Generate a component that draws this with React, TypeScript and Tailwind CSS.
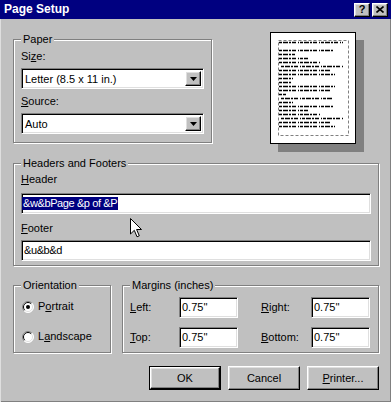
import React from "react";

// Win98 bevels
const RAISED =
  "border border-t-white border-l-white border-r-black border-b-black shadow-[inset_-1px_-1px_0_#808080,inset_1px_1px_0_#dfdfdf]";
const SUNKEN =
  "border border-t-[#808080] border-l-[#808080] border-r-white border-b-white shadow-[inset_1px_1px_0_#000,inset_-1px_-1px_0_#dfdfdf]";

const PAGE_ROWS: [number, number, number][] = [
  [10, 9, 64], [18, 9, 54], [22, 9, 16], [26, 9, 29], [30, 9, 42],
  [34, 11, 62], [38, 9, 52], [42, 9, 56], [46, 9, 14], [50, 9, 12],
  [54, 9, 56], [58, 9, 51], [62, 9, 7], [66, 11, 52], [70, 9, 14],
  [74, 9, 54], [78, 9, 29], [82, 9, 42], [86, 11, 62], [90, 9, 52],
  [94, 9, 56],
];

const GroupBox = ({ label, className, children }: { label: string; className?: string; children?: React.ReactNode }) => (
  <div className={`relative border border-[#808080] shadow-[inset_1px_1px_0_#fff,1px_1px_0_#fff] ${className ?? ""}`}>
    <span className="absolute -top-[7px] left-[7px] bg-[#c0c0c0] px-[2px] leading-[13px]">{label}</span>
    {children}
  </div>
);

const Combo = ({ value }: { value: string }) => (
  <div className={`h-[21px] bg-white flex items-stretch p-[2px] ${SUNKEN}`}>
    <span className="flex-1 pl-[1px] leading-[17px]">{value}</span>
    <span className={`w-[16px] bg-[#c0c0c0] flex items-center justify-center ${RAISED}`}>
      <svg width="7" height="4" viewBox="0 0 7 4">
        <polygon points="0,0 7,0 3.5,4" fill="#000" />
      </svg>
    </span>
  </div>
);

const Field = ({ children, className }: { children: React.ReactNode; className?: string }) => (
  <div className={`h-[21px] bg-white px-[2px] flex items-center ${SUNKEN} ${className ?? ""}`}>{children}</div>
);

const Radio = ({ checked }: { checked?: boolean }) => (
  <svg width="12" height="12" viewBox="0 0 12 12" className="shrink-0">
    <circle cx="6" cy="6" r="5.5" fill="#fff" />
    <path d="M9.9 2.1 A5.5 5.5 0 0 0 2.1 9.9" stroke="#808080" fill="none" />
    <path d="M2.1 9.9 A5.5 5.5 0 0 0 9.9 2.1" stroke="#fff" fill="none" />
    <path d="M9.2 2.8 A4.5 4.5 0 0 0 2.8 9.2" stroke="#000" fill="none" />
    <path d="M2.8 9.2 A4.5 4.5 0 0 0 9.2 2.8" stroke="#dfdfdf" fill="none" />
    {checked && <circle cx="6" cy="6" r="2" fill="#000" />}
  </svg>
);

const Btn = ({ children }: { children: React.ReactNode }) => (
  <button className={`w-[72px] h-[24px] bg-[#c0c0c0] flex items-center justify-center ${RAISED}`}>{children}</button>
);

export default function App() {
  return (
    <div className="relative w-[391px] h-[402px] overflow-hidden bg-[#c0c0c0] text-black text-[11px] leading-[13px] font-['Liberation_Sans',Arial,sans-serif] shadow-[inset_1px_0_0_#dfdfdf,inset_-1px_-1px_0_#808080]">
      {/* Title bar */}
      <div className="h-[19px] bg-[#000080] flex items-center pl-[4px] pr-[3px]">
        <span className="flex-1 text-white font-bold text-[12px]">Page Setup</span>
        <div className="flex gap-[2px]">
          <span className={`w-[16px] h-[14px] bg-[#c0c0c0] flex items-center justify-center font-bold text-[11px] leading-none ${RAISED}`}>?</span>
          <span className={`w-[16px] h-[14px] bg-[#c0c0c0] flex items-center justify-center ${RAISED}`}>
            <svg width="8" height="7" viewBox="0 0 8 7">
              <path d="M0.5 0.5 L7.5 6.5 M7.5 0.5 L0.5 6.5" stroke="#000" strokeWidth="1.6" />
            </svg>
          </span>
        </div>
      </div>

      <div className="pl-[13px] pr-[12px]">
        {/* Paper + preview */}
        <div className="flex items-start">
          <GroupBox label="Paper" className="mt-[20px] w-[199px] px-[7px] pt-[10px] pb-[8px]">
            <div>Si<u>z</u>e:</div>
            <div className="mt-[5px]"><Combo value="Letter (8.5 x 11 in.)" /></div>
            <div className="mt-[6px]"><u>S</u>ource:</div>
            <div className="mt-[5px]"><Combo value="Auto" /></div>
          </GroupBox>

          <div className="ml-[58px] mt-[13px] mb-[8px] w-[86px] h-[112px] bg-white border border-black shadow-[8px_8px_0_#808080]">
            <svg width="84" height="110" viewBox="1 1 84 110">
              <rect x="8.5" y="8.5" width="70" height="95" fill="none" stroke="#808080" strokeDasharray="3 2" />
              {PAGE_ROWS.map(([y, x, w], i) => (
                <line key={i} x1={x} y1={y + 0.5} x2={x + w} y2={y + 0.5} stroke="#000" strokeWidth="1.3" strokeDasharray="3 1 5 1 2 1 4 2 1 1" />
              ))}
            </svg>
          </div>
        </div>

        {/* Headers and Footers */}
        <GroupBox label="Headers and Footers" className="mt-[11px] px-[7px] pt-[9px] pb-[4px]">
          <div><u>H</u>eader</div>
          <Field className="mt-[7px] !px-0">
            <span className="bg-[#000080] text-white px-[1px] leading-[13px] tracking-[-0.4px]">&amp;w&amp;bPage &amp;p of &amp;P</span>
          </Field>
          <div className="mt-[8px]"><u>F</u>ooter</div>
          <Field className="mt-[5px] tracking-[-0.4px]">&amp;u&amp;b&amp;d</Field>
        </GroupBox>

        {/* Orientation + Margins */}
        <div className="mt-[19px] flex gap-[11px]">
          <GroupBox label="Orientation" className="w-[98px] h-[68px] pl-[8px] pt-[14px]">
            <div className="flex items-center gap-[4px]">
              <Radio checked />
              <span>P<u>o</u>rtrait</span>
            </div>
            <div className="mt-[17px] flex items-center gap-[4px]">
              <Radio />
              <span>L<u>a</u>ndscape</span>
            </div>
          </GroupBox>

          <GroupBox label="Margins (inches)" className="flex-1 h-[68px] px-[7px] pt-[11px]">
            <div className="flex items-center">
              <span className="w-[49px]"><u>L</u>eft:</span>
              <Field className="w-[59px]">0.75''</Field>
              <span className="ml-[23px] w-[50px]"><u>R</u>ight:</span>
              <Field className="w-[59px]">0.75''</Field>
            </div>
            <div className="mt-[9px] flex items-center">
              <span className="w-[49px]"><u>T</u>op:</span>
              <Field className="w-[59px]">0.75''</Field>
              <span className="ml-[23px] w-[50px]"><u>B</u>ottom:</span>
              <Field className="w-[59px]">0.75''</Field>
            </div>
          </GroupBox>
        </div>

        {/* Buttons */}
        <div className="mt-[13px] flex justify-end gap-[7px]">
          <div className="border border-black">
            <button className={`w-[70px] h-[22px] bg-[#c0c0c0] flex items-center justify-center ${RAISED}`}>OK</button>
          </div>
          <Btn>Cancel</Btn>
          <Btn><span><u>P</u>rinter...</span></Btn>
        </div>
      </div>

      {/* Mouse pointer */}
      <svg className="absolute left-[130px] top-[218px]" width="12" height="20" viewBox="0 0 12 20">
        <path d="M0.5 0.5 L0.5 16 L4.3 12.3 L7 18.8 L9.3 17.8 L6.6 11.5 L11.5 11.5 Z" fill="#fff" stroke="#000" />
      </svg>
    </div>
  );
}
